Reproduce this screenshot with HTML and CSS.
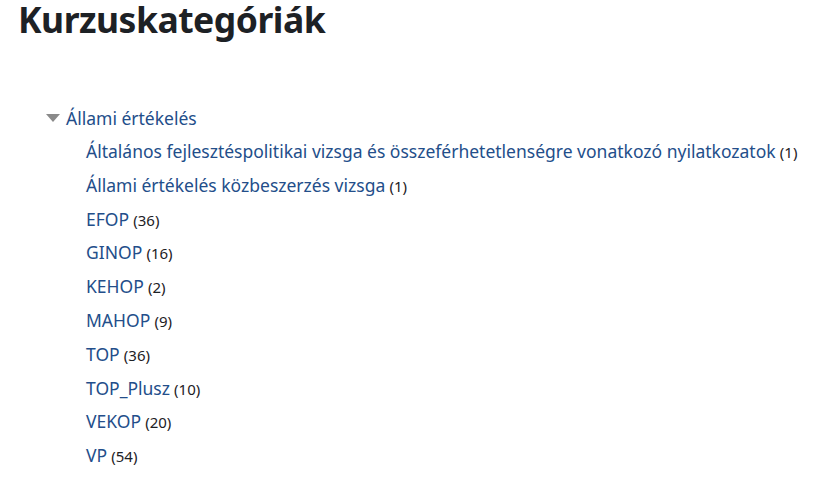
FILE: index.html
```html
<!DOCTYPE html>
<html lang="hu">
<head>
<meta charset="utf-8">
<title>Kurzuskategóriák</title>
<link rel="stylesheet" href="styles.css">
</head>
<body>
<div class="page">
  <h2 class="title">Kurzuskategóriák</h2>
  <div class="tree">
    <div class="parent">
      <span class="caret"></span>
      <a href="#" class="link">Állami értékelés</a>
    </div>
    <ul class="children">
      <li><a href="#" class="link">Általános fejlesztéspolitikai vizsga és összeférhetetlenségre vonatkozó nyilatkozatok</a> <span class="count">(1)</span></li>
      <li><a href="#" class="link">Állami értékelés közbeszerzés vizsga</a> <span class="count">(1)</span></li>
      <li><a href="#" class="link">EFOP</a> <span class="count">(36)</span></li>
      <li><a href="#" class="link">GINOP</a> <span class="count">(16)</span></li>
      <li><a href="#" class="link">KEHOP</a> <span class="count">(2)</span></li>
      <li><a href="#" class="link">MAHOP</a> <span class="count">(9)</span></li>
      <li><a href="#" class="link">TOP</a> <span class="count">(36)</span></li>
      <li><a href="#" class="link">TOP_Plusz</a> <span class="count">(10)</span></li>
      <li><a href="#" class="link">VEKOP</a> <span class="count">(20)</span></li>
      <li><a href="#" class="link">VP</a> <span class="count">(54)</span></li>
    </ul>
  </div>
</div>
</body>
</html>
```

FILE: styles.css
```css
html, body {
  margin: 0;
  padding: 0;
  background: #ffffff;
}
body {
  font-family: "Noto Sans", "Open Sans", sans-serif;
  color: #1d2125;
}
.page {
  padding: 0 18px;
}
.title {
  margin: 0;
  font-size: 35.5px;
  font-weight: 700;
  line-height: 38px;
  color: #1d2125;
  letter-spacing: -0.5px;
}
.tree {
  margin-top: 65px;
  padding-left: 28px;
}
.parent {
  display: flex;
  align-items: center;
  gap: 6px;
  height: 30px;
}
.caret {
  width: 0;
  height: 0;
  border-left: 7px solid transparent;
  border-right: 7px solid transparent;
  border-top: 8px solid #8a8a8a;
}
.link {
  color: #234e8a;
  text-decoration: none;
  font-size: 17.5px;
}
.children {
  list-style: none;
  margin: 0;
  padding: 2px 0 0 40px;
}
.children li {
  height: 33.8px;
  line-height: 33.8px;
  white-space: nowrap;
}
.count {
  font-size: 15px;
  color: #1d2125;
}
```
